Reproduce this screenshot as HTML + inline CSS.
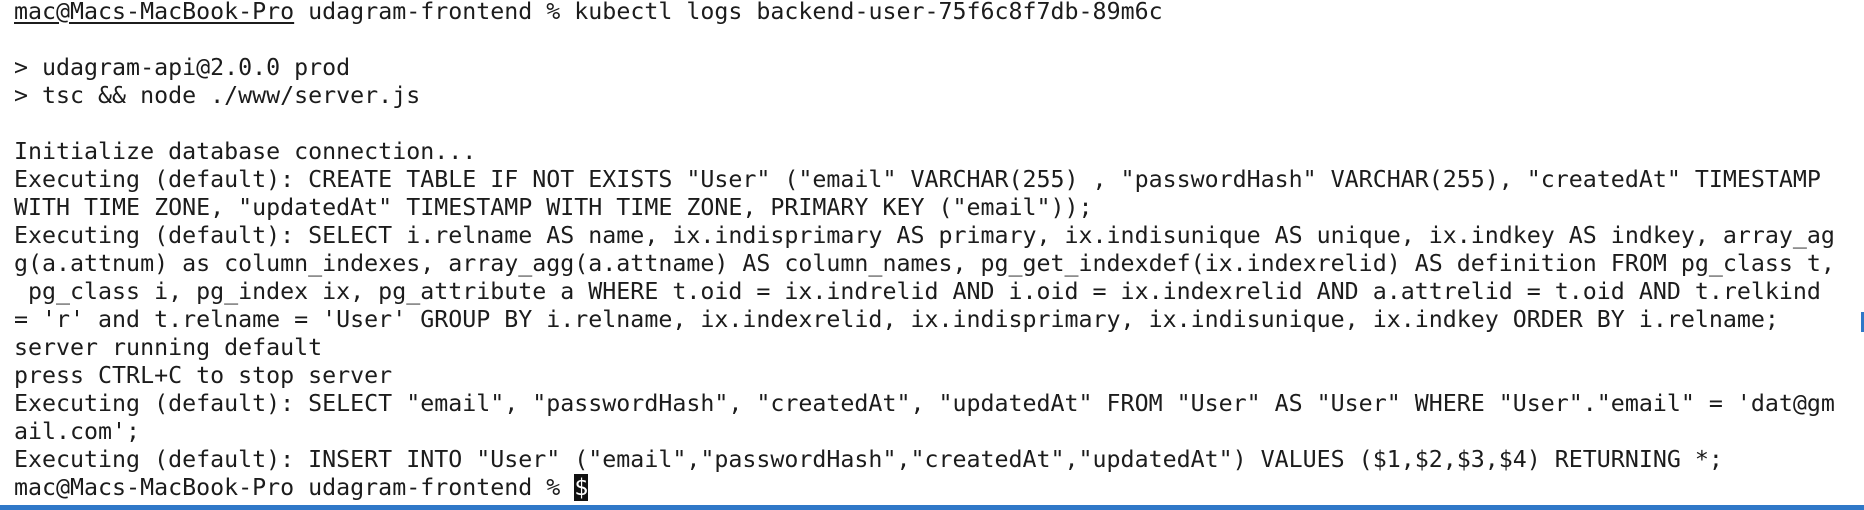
<!DOCTYPE html>
<html><head><meta charset="utf-8"><style>
html,body{margin:0;padding:0;background:#fff;width:1864px;height:510px;overflow:hidden;position:relative}
pre{position:absolute;left:14px;top:-2px;margin:0;font-family:"DejaVu Sans Mono","Liberation Mono",monospace;font-size:23.28px;line-height:28px;color:#1c1c1c;white-space:pre}
u{text-decoration:underline;text-underline-offset:3px}
.cur{background:#111;color:#fff}
.bar{position:absolute;left:0;bottom:0;width:1864px;height:5px;background:#2f78c8}
.m{position:absolute;right:0;top:312px;width:3px;height:20px;background:#2f78c8}
</style></head><body>
<pre><u>mac@Macs-MacBook-Pro</u> udagram-frontend % kubectl logs backend-user-75f6c8f7db-89m6c

&gt; udagram-api@2.0.0 prod
&gt; tsc &amp;&amp; node ./www/server.js

Initialize database connection...
Executing (default): CREATE TABLE IF NOT EXISTS "User" ("email" VARCHAR(255) , "passwordHash" VARCHAR(255), "createdAt" TIMESTAMP
WITH TIME ZONE, "updatedAt" TIMESTAMP WITH TIME ZONE, PRIMARY KEY ("email"));
Executing (default): SELECT i.relname AS name, ix.indisprimary AS primary, ix.indisunique AS unique, ix.indkey AS indkey, array_ag
g(a.attnum) as column_indexes, array_agg(a.attname) AS column_names, pg_get_indexdef(ix.indexrelid) AS definition FROM pg_class t,
 pg_class i, pg_index ix, pg_attribute a WHERE t.oid = ix.indrelid AND i.oid = ix.indexrelid AND a.attrelid = t.oid AND t.relkind
= 'r' and t.relname = 'User' GROUP BY i.relname, ix.indexrelid, ix.indisprimary, ix.indisunique, ix.indkey ORDER BY i.relname;
server running default
press CTRL+C to stop server
Executing (default): SELECT "email", "passwordHash", "createdAt", "updatedAt" FROM "User" AS "User" WHERE "User"."email" = 'dat@gm
ail.com';
Executing (default): INSERT INTO "User" ("email","passwordHash","createdAt","updatedAt") VALUES ($1,$2,$3,$4) RETURNING *;
mac@Macs-MacBook-Pro udagram-frontend % <span class="cur">$</span></pre>
<div class="m"></div>
<div class="bar"></div>
</body></html>
